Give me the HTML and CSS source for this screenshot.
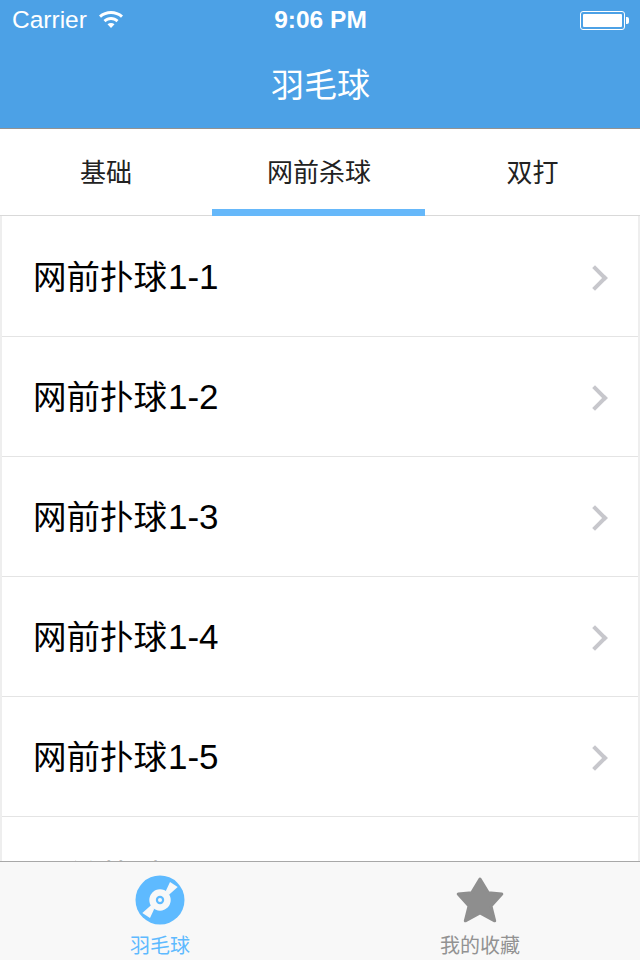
FILE: index.html
```html
<!doctype html>
<html lang="zh">
<head>
    <meta charset="utf-8">
    <meta name="viewport" content="width=device-width, initial-scale=1">
    <title>羽毛球</title>
    <link rel="stylesheet" href="styles.css">
</head>
<body>
    <div class="page">
        <div class="header">
            <div class="statusbar">
                <div class="status-left">
                    <span class="carrier">Carrier</span>
                    <svg class="wifi" width="26" height="20" viewBox="0 0 26 20">
                        <path d="M1 6.5C7.5 .5 18.500 .5 25 6.500L23 8.800C17.500 3.800 8.500 3.800 3 8.800Z" fill="#fff"/>
                        <path d="M5.500 11C9.800 7 16.200 7 20.500 11L18.500 13.200C15.300 10.400 10.700 10.400 7.500 13.200Z" fill="#fff"/>
                        <path d="M9.500 15.200C11.500 13.500 14.500 13.500 16.500 15.200L13 19Z" fill="#fff"/>
                    </svg>
                </div>
                <div class="status-time">9:06 PM</div>
                <div class="status-right">
                    <div class="battery"><div class="battery-fill"></div></div>
                    <div class="battery-tip"></div>
                </div>
            </div>
            <div class="title">羽毛球</div>
        </div>

        <div class="tabs">
            <div class="tab">基础</div>
            <div class="tab active">网前杀球</div>
            <div class="tab">双打</div>
        </div>

        <div class="list">
            <div class="row"><span class="row-text">网前扑球<span class="num">1-1</span></span><i class="chevron"></i></div>
            <div class="row"><span class="row-text">网前扑球<span class="num">1-2</span></span><i class="chevron"></i></div>
            <div class="row"><span class="row-text">网前扑球<span class="num">1-3</span></span><i class="chevron"></i></div>
            <div class="row"><span class="row-text">网前扑球<span class="num">1-4</span></span><i class="chevron"></i></div>
            <div class="row"><span class="row-text">网前扑球<span class="num">1-5</span></span><i class="chevron"></i></div>
            <div class="row"><span class="row-text">网前扑球<span class="num">1-6</span></span><i class="chevron"></i></div>
        </div>

        <div class="tabbar">
            <div class="tabbar-item selected">
                <svg width="50" height="50" viewBox="0 0 50 50">
                    <circle cx="25" cy="25" r="24.500" fill="#5ebaff"/>
                    <path d="M30.700 16.300L35 7L42.700 12L34 19.700Z" fill="#f8f8f8"/>
                    <path d="M19.300 33.700L15 43L7.300 38L16 30.300Z" fill="#f8f8f8"/>
                    <circle cx="25" cy="25" r="10.700" fill="#f8f8f8"/>
                    <circle cx="25" cy="25" r="4.200" fill="#5ebaff"/>
                    <circle cx="25" cy="25" r="2" fill="#f8f8f8"/>
                </svg>
                <span>羽毛球</span>
            </div>
            <div class="tabbar-item">
                <svg width="50" height="50" viewBox="0 0 50 50">
                    <polygon points="25,4 33.300,17.800 46.800,19 36,31 39.700,45.800 25,38 10.300,45.800 14,31 3.200,19 16.700,17.800" fill="#8e8e8e" stroke="#8e8e8e" stroke-width="3" stroke-linejoin="round"/>
                </svg>
                <span>我的收藏</span>
            </div>
        </div>
    </div>
</body>
</html>
```

FILE: styles.css
```css
* {
    box-sizing: border-box;
}

html, body {
    margin: 0;
    padding: 0;
}

body {
    font-family: "Liberation Sans", "Noto Sans CJK SC", sans-serif;
    background-color: #fff;
}

.page {
    display: flex;
    flex-direction: column;
    width: 640px;
    height: 960px;
    overflow: hidden;
}

.header {
    flex: none;
    height: 129px;
    background-color: #4ca1e6;
    border-bottom: 1px solid #929292;
    color: #fff;
}

.statusbar {
    display: grid;
    grid-template-columns: 1fr auto 1fr;
    align-items: center;
    height: 40px;
    padding: 0 11px 0 12px;
}

.status-left {
    display: flex;
    align-items: center;
    gap: 11px;
}

.carrier {
    font-size: 24.500px;
}

.wifi {
    margin-top: -2px;
}

.status-time {
    font-size: 24.500px;
    font-weight: bold;
}

.status-right {
    display: flex;
    align-items: center;
    justify-content: flex-end;
    gap: 1px;
}

.battery {
    width: 45px;
    height: 19px;
    padding: 2px;
    border: 1px solid #fff;
    border-radius: 3px;
}

.battery-fill {
    height: 100%;
    background-color: #fff;
    border-radius: 1px;
}

.battery-tip {
    width: 3px;
    height: 7px;
    background-color: #fff;
    border-radius: 0 2px 2px 0;
}

.title {
    height: 88px;
    padding-left: 1px;
    line-height: 91px;
    font-size: 33px;
    text-align: center;
}

.tabs {
    flex: none;
    display: flex;
    height: 87px;
    border-bottom: 1px solid #d9d9d9;
}

.tab {
    width: 212px;
    padding-top: 25px;
    font-size: 26px;
    line-height: 38px;
    color: #222;
    text-align: center;
}

.tab.active {
    width: 213px;
    height: 87px;
    padding-left: 1px;
    border-bottom: 7px solid #66b8fa;
}

.tab:last-child {
    width: 215px;
}

.list {
    flex: 1;
    min-height: 0;
    overflow: hidden;
    padding-top: 1px;
    border-left: 2px solid #eee;
    border-right: 2px solid #eee;
}

.row {
    display: flex;
    align-items: center;
    justify-content: space-between;
    height: 120px;
    padding: 0 32px 0 31px;
    border-bottom: 1px solid #e4e4e4;
    font-size: 33.500px;
    color: #000;
}

.row-text {
    margin-bottom: 4px;
}

.num {
    margin-left: 1px;
    font-size: 35px;
}

.chevron {
    width: 18px;
    height: 18px;
    margin-top: 3px;
    margin-right: 2px;
    border-top: 4px solid #c7c7cc;
    border-right: 4px solid #c7c7cc;
    transform: rotate(45deg);
}

.tabbar {
    flex: none;
    display: flex;
    height: 99px;
    background-color: #f8f8f8;
    border-top: 1px solid #a8a8a8;
}

.tabbar-item {
    flex: 1;
    display: flex;
    flex-direction: column;
    align-items: center;
    padding-top: 13px;
    font-size: 20px;
    line-height: 24px;
    color: #929292;
}

.tabbar-item span {
    margin-top: 9px;
}

.tabbar-item.selected {
    color: #5ebaff;
}
```
